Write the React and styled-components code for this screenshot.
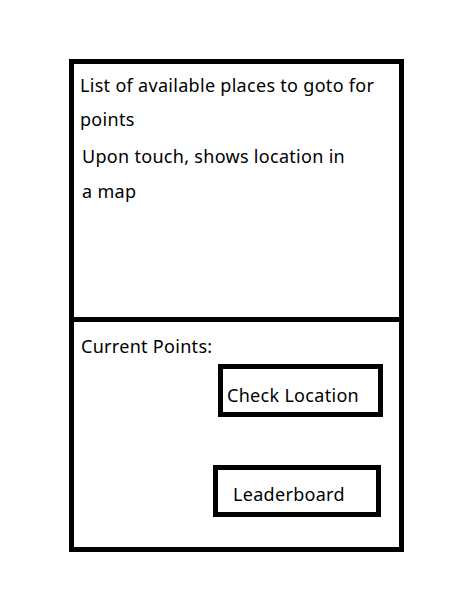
import React from "react";
import styled, { createGlobalStyle } from "styled-components";

const Global = createGlobalStyle`
  html, body { margin: 0; padding: 0; background: #fff; }
  body { font-family: "Noto Sans", "Open Sans", sans-serif; color: #000; letter-spacing: 0.3px; }
`;

const Frame = styled.div`
  box-sizing: border-box;
  margin: 59px 0 0 69px;
  width: 335px;
  height: 493px;
  border: 5px solid #000;
  display: flex;
  flex-direction: column;
`;

const TopPanel = styled.section`
  box-sizing: content-box;
  height: 249px;
  padding-top: 4px;
  border-bottom: 5px solid #000;
  flex: none;
`;

const Note = styled.p`
  margin: ${(p) => p.$mt || 0}px 0 0 ${(p) => p.$ml}px;
  width: ${(p) => p.$w}px;
  font-size: 18px;
  line-height: ${(p) => p.$lh}px;
`;

const BottomPanel = styled.section`
  flex: 1;
  display: flex;
  flex-direction: column;
  padding-top: 12px;
`;

const Label = styled.div`
  font-size: 18px;
  padding-left: 7px;
`;

const ActionButton = styled.button`
  box-sizing: border-box;
  align-self: flex-end;
  display: flex;
  align-items: flex-start;
  justify-content: flex-start;
  width: ${(p) => p.$w}px;
  height: ${(p) => p.$h}px;
  margin: ${(p) => p.$mt}px ${(p) => p.$mr}px 0 0;
  padding: ${(p) => p.$pt}px 0 0 ${(p) => p.$pl}px;
  border: 5px solid #000;
  background: #fff;
  font-family: inherit;
  font-size: 18px;
  letter-spacing: inherit;
  line-height: normal;
  color: #000;
  text-align: left;
  cursor: pointer;
`;

export default function App() {
  return (
    <>
      <Global />
      <Frame>
        <TopPanel>
          <Note $ml={6} $w={305} $lh={34}>
            List of available places to goto for points
          </Note>
          <Note $ml={8} $w={272} $lh={35} $mt={2.5}>
            Upon touch, shows location in a map
          </Note>
        </TopPanel>
        <BottomPanel>
          <Label>Current Points:</Label>
          <ActionButton $w={165} $h={53} $mt={6} $mr={16} $pt={14} $pl={4}>
            Check Location
          </ActionButton>
          <ActionButton $w={168} $h={52} $mt={48} $mr={18} $pt={12} $pl={15}>
            Leaderboard
          </ActionButton>
        </BottomPanel>
      </Frame>
    </>
  );
}
